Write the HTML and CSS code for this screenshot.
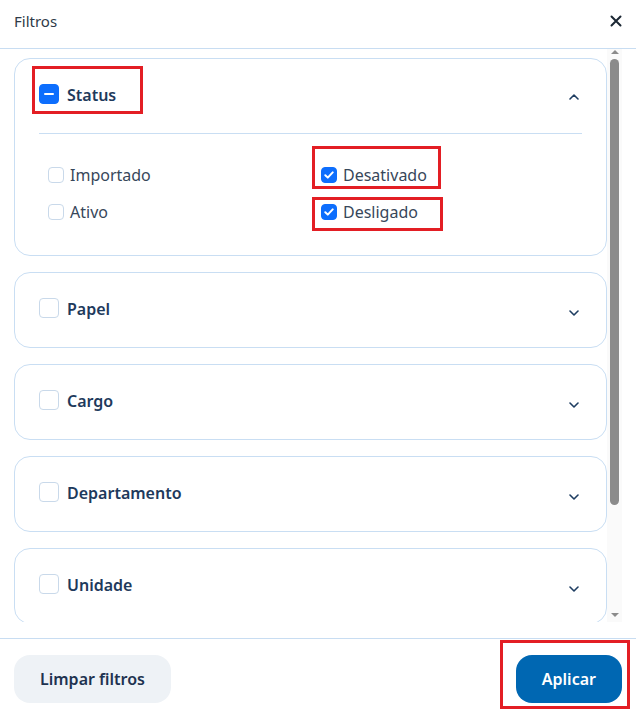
FILE: index.html
```html
<!DOCTYPE html>
<html lang="pt-BR">
<head>
<meta charset="UTF-8">
<title>Filtros</title>
<link rel="stylesheet" href="styles.css">
</head>
<body>
<div class="modal">
  <div class="modal-header">
    <span class="modal-title">Filtros</span>
    <button class="close" type="button" aria-label="Fechar">
      <svg width="12" height="12" viewBox="0 0 12 12"><path d="M1.5 1.5 10.5 10.5M10.5 1.5 1.5 10.5" stroke="#1b2733" stroke-width="2" stroke-linecap="round"/></svg>
    </button>
  </div>

  <div class="modal-body">
    <div class="scroll-area">
      <!-- Status: aberto -->
      <div class="card">
        <div class="card-head">
          <label class="card-title">
            <span class="box box-lg on">
              <svg width="10" height="2" viewBox="0 0 10 2"><rect width="10" height="2" rx="1" fill="#fff"/></svg>
            </span>
            Status
            <span class="mark mark-title"></span>
          </label>
          <span class="chev chev-up">
            <svg width="10" height="6" viewBox="0 0 10 6"><path d="M1 5 5 1 9 5" fill="none" stroke="#1e3d61" stroke-width="1.6" stroke-linecap="round" stroke-linejoin="round"/></svg>
          </span>
        </div>
        <div class="card-content">
          <label class="option"><span class="box"></span>Importado</label>
          <label class="option">
            <span class="box on">
              <svg width="10" height="8" viewBox="0 0 10 8"><path d="M1.3 4.2 3.8 6.6 8.7 1.4" fill="none" stroke="#fff" stroke-width="2" stroke-linecap="round" stroke-linejoin="round"/></svg>
            </span>Desativado<span class="mark mark-opt"></span>
          </label>
          <label class="option"><span class="box"></span>Ativo</label>
          <label class="option">
            <span class="box on">
              <svg width="10" height="8" viewBox="0 0 10 8"><path d="M1.3 4.2 3.8 6.6 8.7 1.4" fill="none" stroke="#fff" stroke-width="2" stroke-linecap="round" stroke-linejoin="round"/></svg>
            </span>Desligado<span class="mark mark-opt2"></span>
          </label>
        </div>
      </div>

      <div class="card">
        <div class="card-head">
          <label class="card-title"><span class="box box-lg"></span>Papel</label>
          <span class="chev"><svg width="10" height="6" viewBox="0 0 10 6"><path d="M1 1 5 5 9 1" fill="none" stroke="#1e3d61" stroke-width="1.6" stroke-linecap="round" stroke-linejoin="round"/></svg></span>
        </div>
      </div>

      <div class="card">
        <div class="card-head">
          <label class="card-title"><span class="box box-lg"></span>Cargo</label>
          <span class="chev"><svg width="10" height="6" viewBox="0 0 10 6"><path d="M1 1 5 5 9 1" fill="none" stroke="#1e3d61" stroke-width="1.6" stroke-linecap="round" stroke-linejoin="round"/></svg></span>
        </div>
      </div>

      <div class="card">
        <div class="card-head">
          <label class="card-title"><span class="box box-lg"></span>Departamento</label>
          <span class="chev"><svg width="10" height="6" viewBox="0 0 10 6"><path d="M1 1 5 5 9 1" fill="none" stroke="#1e3d61" stroke-width="1.6" stroke-linecap="round" stroke-linejoin="round"/></svg></span>
        </div>
      </div>

      <div class="card">
        <div class="card-head">
          <label class="card-title"><span class="box box-lg"></span>Unidade</label>
          <span class="chev"><svg width="10" height="6" viewBox="0 0 10 6"><path d="M1 1 5 5 9 1" fill="none" stroke="#1e3d61" stroke-width="1.6" stroke-linecap="round" stroke-linejoin="round"/></svg></span>
        </div>
      </div>
    </div>

    <div class="scrollbar">
      <span class="arrow arrow-up"></span>
      <span class="thumb"></span>
      <span class="track-rest"></span>
      <span class="arrow arrow-down"></span>
    </div>
  </div>

  <div class="modal-footer">
    <button class="btn btn-light" type="button">Limpar filtros</button>
    <button class="btn btn-primary" type="button">Aplicar<span class="mark mark-btn"></span></button>
  </div>
</div>
</body>
</html>
```

FILE: styles.css
```css
html, body {
	margin: 0;
	padding: 0;
}
body {
	font-family: "Noto Sans", "Open Sans", sans-serif;
	color: #37475a;
	background: #fff;
}
.modal {
	display: flex;
	flex-direction: column;
	width: 636px;
	height: 716px;
}

/* header */
.modal-header {
	display: flex;
	align-items: center;
	justify-content: space-between;
	height: 48px;
	padding: 0 12px 0 14px;
	border-bottom: 1px solid #c8ddf2;
	flex: none;
}
.modal-title {
	font-size: 15px;
	color: #2e3a48;
	margin-top: -6px;
}
.close {
	border: 0;
	background: none;
	padding: 0;
	width: 16px;
	height: 16px;
	display: flex;
	align-items: center;
	justify-content: center;
	margin-top: -6px;
}

/* corpo */
.modal-body {
	display: flex;
	flex: 1;
	min-height: 0;
	margin: 0 14px 16px 14px;
}
.scroll-area {
	flex: 1;
	overflow: hidden;
	padding-top: 9px;
}

/* barra de rolagem desenhada */
.scrollbar {
	display: flex;
	flex-direction: column;
	align-items: center;
	width: 15px;
	background: #fafafa;
	flex: none;
}
.arrow {
	width: 0;
	height: 0;
	border-left: 4px solid transparent;
	border-right: 4px solid transparent;
}
.arrow-up {
	border-bottom: 4px solid #8b8b8b;
	margin: 1px 0 5px;
}
.arrow-down {
	border-top: 4px solid #8b8b8b;
	margin: 0 0 5px;
}
.thumb {
	width: 9px;
	height: 446px;
	border-radius: 5px;
	background: #8b8b8b;
}
.track-rest {
	flex: 1;
}

/* cards */
.card {
	border: 1px solid #c9def3;
	border-radius: 16px;
	margin-bottom: 16px;
}
.card-head {
	display: flex;
	align-items: center;
	justify-content: space-between;
	height: 26px;
	padding: 24px;
}
.card-title {
	position: relative;
	display: flex;
	align-items: center;
	gap: 8px;
	font-size: 16px;
	font-weight: 600;
	color: #1e3a5c;
	margin-top: -2px;
}
.box-lg {
	margin-top: -3px;
}
.chev {
	display: flex;
	align-items: center;
	justify-content: center;
	width: 16px;
	height: 16px;
	margin-top: 6px;
}
.chev-up {
	margin-top: 2px;
}
.card-content {
	display: grid;
	grid-template-columns: 273px 1fr;
	row-gap: 13px;
	margin: 0 24px;
	padding: 29px 9px 31px;
	border-top: 1px solid #c9def3;
}
.option {
	position: relative;
	display: flex;
	justify-self: start;
	align-items: center;
	gap: 6px;
	height: 24px;
	font-size: 16px;
	color: #37475a;
}

/* caixas de seleção */
.box {
	display: inline-flex;
	align-items: center;
	justify-content: center;
	box-sizing: border-box;
	width: 16px;
	height: 16px;
	border: 1px solid #c9d9ea;
	border-radius: 4px;
	background: #fff;
	flex: none;
}
.box-lg {
	width: 20px;
	height: 20px;
	border-radius: 4px;
}
.box.on {
	background: #0d6efd;
	border-color: #0d6efd;
}

/* rodapé */
.modal-footer {
	display: flex;
	justify-content: space-between;
	align-items: center;
	flex: none;
	height: 77px;
	padding: 0 14px;
	border-top: 1px solid #c8ddf2;
}
.btn {
	position: relative;
	height: 48px;
	padding: 0 26px;
	border: 0;
	border-radius: 16px;
	font-family: "Noto Sans", "Open Sans", sans-serif;
	font-size: 16px;
	font-weight: 600;
	white-space: nowrap;
	margin-top: 2px;
}
.btn-light {
	background: #eef2f6;
	color: #1e3350;
}
.btn-primary {
	background: #0067b2;
	color: #fff;
}

/* marcações vermelhas sobre a tela */
.mark {
	position: absolute;
	border: 3px solid #e31e24;
	pointer-events: none;
}
.mark-title {
	top: -18px;
	bottom: -8px;
	left: -7px;
	right: -27px;
}
.mark-opt {
	top: -17px;
	bottom: -2px;
	left: -9px;
	right: -8px;
}
.mark-opt2 {
	top: -3px;
	bottom: -7px;
	left: -9px;
	right: -19px;
}
.mark-btn {
	top: -15px;
	bottom: -6px;
	left: -16px;
	right: -8px;
}
```
